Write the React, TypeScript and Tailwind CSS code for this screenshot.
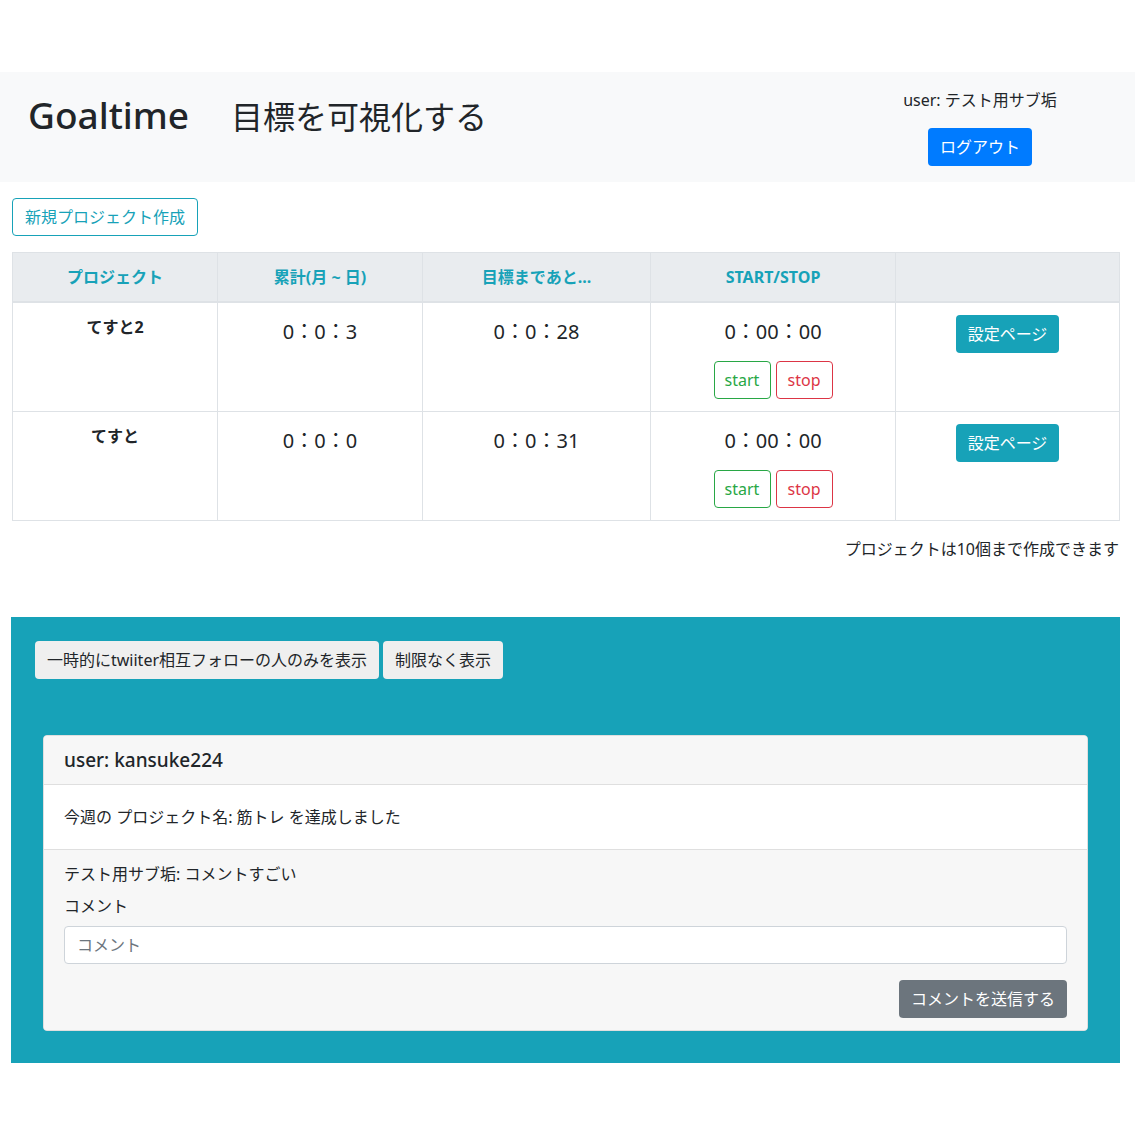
const font = { fontFamily: '"Noto Sans", "Noto Sans CJK JP", sans-serif' }

const rows = [
  { name: "てすと2", total: "0：0：3", left: "0：0：28" },
  { name: "てすと", total: "0：0：0", left: "0：0：31" },
]

const App = () => {
  return (
    <div className="min-h-[1135px] bg-white text-[#212529] text-base leading-6 pt-[72px]" style={font}>
      {/* header */}
      <div className="bg-[#f8f9fa] h-[110px] flex justify-between pl-[28px]">
        <div className="flex items-baseline pt-[19px]">
          <h1 className="text-[37px] leading-[48px] font-medium">Goaltime</h1>
          <h2 className="text-[32px] leading-[40px] ml-[42px]">目標を可視化する</h2>
        </div>
        <div className="w-[200px] mr-[55px] pt-[16px] flex flex-col items-center">
          <p>user: テスト用サブ垢</p>
          <button className="mt-[16px] h-[38px] px-3 rounded bg-[#007bff] text-white">ログアウト</button>
        </div>
      </div>

      {/* projects */}
      <div className="px-[12px] pt-[16px]">
        <button className="h-[38px] px-3 rounded border border-[#17a2b8] text-[#17a2b8]">新規プロジェクト作成</button>
        <table className="mt-[16px] w-[1107px] border-collapse table-fixed">
          <colgroup>
            <col className="w-[205px]" />
            <col className="w-[205px]" />
            <col className="w-[228px]" />
            <col className="w-[245px]" />
            <col className="w-[224px]" />
          </colgroup>
          <thead>
            <tr className="bg-[#e9ecef] text-[#17a2b8] font-bold h-[49px]">
              <th className="border border-[#dee2e6] border-b-2">プロジェクト</th>
              <th className="border border-[#dee2e6] border-b-2">累計(月 ~ 日)</th>
              <th className="border border-[#dee2e6] border-b-2">目標まであと...</th>
              <th className="border border-[#dee2e6] border-b-2">START/STOP</th>
              <th className="border border-[#dee2e6] border-b-2"></th>
            </tr>
          </thead>
          <tbody>
            {rows.map((r) => (
              <tr key={r.name} className="h-[109px]">
                <td className="border border-[#dee2e6] align-top text-center p-3 font-bold">{r.name}</td>
                <td className="border border-[#dee2e6] align-top text-center p-3 text-xl leading-[30px]">
                  <div className="mt-[2px]">{r.total}</div>
                </td>
                <td className="border border-[#dee2e6] align-top text-center p-3 text-xl leading-[30px]">
                  <div className="mt-[2px]">{r.left}</div>
                </td>
                <td className="border border-[#dee2e6] align-top text-center p-3">
                  <div className="mt-[2px] text-xl leading-[30px]">0：00：00</div>
                  <div className="mt-[14px] flex justify-center gap-[5px]">
                    <button className="h-[38px] w-[57px] rounded border border-[#28a745] text-[#28a745]">start</button>
                    <button className="h-[38px] w-[57px] rounded border border-[#dc3545] text-[#dc3545]">stop</button>
                  </div>
                </td>
                <td className="border border-[#dee2e6] align-top text-center p-3">
                  <button className="h-[38px] px-3 rounded bg-[#17a2b8] text-white">設定ページ</button>
                </td>
              </tr>
            ))}
          </tbody>
        </table>
        <p className="mt-[16px] text-right pr-[4px]">プロジェクトは10個まで作成できます</p>
      </div>

      {/* timeline */}
      <div className="mt-[56px] ml-[11px] w-[1109px] bg-[#17a2b8] p-[24px]">
        <div className="flex gap-[4px]">
          <button className="h-[38px] px-3 rounded bg-[#efefef]">一時的にtwiiter相互フォローの人のみを表示</button>
          <button className="h-[38px] px-3 rounded bg-[#efefef]">制限なく表示</button>
        </div>
        <div className="mt-[56px] mx-2 mb-2 rounded border border-[#dfdfdf] bg-white overflow-hidden">
          <div className="h-[49px] flex items-center px-5 bg-[#f7f7f7] border-b border-[#dfdfdf] text-[19px] font-medium">user: kansuke224</div>
          <div className="h-[64px] flex items-center px-5">今週の プロジェクト名: 筋トレ を達成しました</div>
          <div className="bg-[#f7f7f7] border-t border-[#dfdfdf] px-5 pt-3 pb-3">
            <p>テスト用サブ垢: コメントすごい</p>
            <p className="mt-2">コメント</p>
            <input
              className="mt-2 w-full h-[38px] px-3 rounded border border-[#ced4da] bg-white placeholder:text-[#6c757d] outline-none"
              placeholder="コメント"
            />
            <div className="mt-4 flex justify-end">
              <button className="h-[38px] px-3 rounded bg-[#6c757d] text-white">コメントを送信する</button>
            </div>
          </div>
        </div>
      </div>
    </div>
  )
}

export default App
